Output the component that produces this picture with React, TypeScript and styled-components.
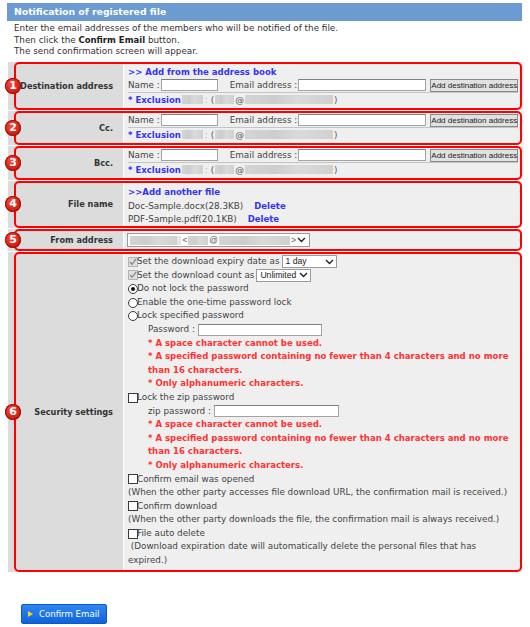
import React from "react";
import styled, { createGlobalStyle } from "styled-components";

const GlobalStyle = createGlobalStyle`
  html, body { margin: 0; padding: 0; background: #fff; }
  body {
    font-family: "DejaVu Sans", Verdana, sans-serif;
    font-size: 8.8px;
    color: #444;
  }
  * { box-sizing: border-box; }
`;

const Page = styled.div`
  padding: 3px 8px 0 7px;
`;

const TitleBar = styled.div`
  height: 18px;
  line-height: 18px;
  background: #6b9bd1;
  color: #fff;
  font-weight: bold;
  font-size: 9.3px;
  padding-left: 7px;
`;

const Intro = styled.div`
  padding: 2px 7px 4px;
  line-height: 11.5px;
  color: #333;
  b { color: #222; font-size: 8.5px; }
`;

const Table = styled.div`
  margin-left: 1px;
  display: flex;
  flex-direction: column;
  gap: 1px;
`;

const Row = styled.div`
  position: relative;
  display: grid;
  grid-template-columns: 115px 1fr;
  gap: 1px;
`;

const Label = styled.div`
  background: #dcdcdc;
  display: flex;
  align-items: center;
  justify-content: flex-end;
  padding-right: 10px;
  font-weight: bold;
  font-size: 8.2px;
  color: #333;
`;

const Value = styled.div<{ $pt: number; $pb: number; $lh?: number }>`
  background: #efefef;
  padding: ${(p) => p.$pt}px 4px ${(p) => p.$pb}px;
  line-height: ${(p) => p.$lh ?? 14}px;
`;

const Outline = styled.div`
  position: absolute;
  top: 0;
  bottom: 0;
  left: 6px;
  right: 0;
  border: 2px solid #ff0000;
  border-radius: 5px;
  pointer-events: none;
`;

const Badge = styled.span`
  position: absolute;
  left: -3px;
  top: 50%;
  width: 16px;
  height: 16px;
  margin-top: -8px;
  border-radius: 50%;
  background: radial-gradient(circle at 40% 35%, #f2503f, #c8140c 75%);
  box-shadow: inset 0 0 0 1px #a80f08;
  color: #fff;
  font-weight: bold;
  font-size: 11px;
  line-height: 16px;
  text-align: center;
  z-index: 2;
`;

const Line = styled.div<{ $h?: number }>`
  display: flex;
  align-items: center;
  height: ${(p) => p.$h ?? 14}px;
  white-space: nowrap;
`;

const NameLine = styled(Line)`
  border-bottom: 1px solid #c4c4c4;
  margin-right: 2px;
`;

const Link = styled.span`
  color: #3535f0;
  font-weight: bold;
  font-size: 8.55px;
  cursor: pointer;
`;

const DeleteLink = styled(Link)`
  margin-left: 11px;
`;

const TextBox = styled.input<{ $w: number }>`
  width: ${(p) => p.$w}px;
  height: 12px;
  padding: 0;
  margin: 0 0 0 1px;
  border: 1px solid #a3a3a3;
  border-top-color: #808080;
  background: #fff;
`;

const EmailLabel = styled.span`
  margin-left: 12px;
`;

const AddButton = styled.button`
  width: 88px;
  height: 13px;
  margin-left: 4px;
  padding: 0;
  font-family: "Liberation Sans", Arial, sans-serif;
  font-size: 8px;
  line-height: 11px;
  color: #222;
  background: #e1e1e1;
  border: 1px solid #8a8a8a;
  border-radius: 0;
  white-space: nowrap;
`;

const Blur = styled.span<{ $w: number; $tone?: string }>`
  display: inline-block;
  width: ${(p) => p.$w}px;
  height: 9px;
  background: ${(p) => p.$tone ?? "linear-gradient(90deg, #d4d4d4, #cdcdcd 35%, #dadada 60%, #d0d0d0)"};
`;

const Faint = styled.span`
  color: #aaa;
  margin: 0 2px;
`;

const Punct = styled.span`
  color: #555;
  margin: 0 1px;
`;

const FakeSelect = styled.span<{ $w: number }>`
  display: inline-flex;
  align-items: center;
  width: ${(p) => p.$w}px;
  height: 13px;
  margin-left: 2px;
  padding: 0 2px 0 3px;
  background: #fff;
  border: 1px solid #9a9a9a;
  font-family: "Liberation Sans", Arial, sans-serif;
  font-size: 8.6px;
  color: #222;
  svg { margin-left: auto; }
`;

const FromSelect = styled(FakeSelect)`
  height: 14px;
  margin-left: -1px;
  padding: 0 3px 0 2px;
`;

const Chevron = () => (
  <svg width="9" height="6" viewBox="0 0 9 6">
    <path d="M1 1 L4.5 4.5 L8 1" fill="none" stroke="#222" strokeWidth="1.4" />
  </svg>
);

const Box = styled.span<{ $disabled?: boolean }>`
  display: inline-flex;
  align-items: center;
  justify-content: center;
  width: 10px;
  height: 10px;
  flex: none;
  border: 1px solid ${(p) => (p.$disabled ? "#b4b4b4" : "#3a3a3a")};
  background: ${(p) => (p.$disabled ? "#dedede" : "#fff")};
  margin-right: -1px;
`;

const Radio = styled.span<{ $on?: boolean }>`
  display: inline-flex;
  align-items: center;
  justify-content: center;
  width: 10px;
  height: 10px;
  flex: none;
  border-radius: 50%;
  border: 1px solid #3a3a3a;
  background: #fff;
  margin-right: -1px;
  &::after {
    content: "";
    width: 4px;
    height: 4px;
    border-radius: 50%;
    background: ${(p) => (p.$on ? "#111" : "transparent")};
  }
`;

const CheckMark = () => (
  <svg width="8" height="8" viewBox="0 0 8 8">
    <path d="M1 4 L3 6.3 L7.2 0.8" fill="none" stroke="#8a8a8a" strokeWidth="1.3" />
  </svg>
);

const Indent = styled.div`
  padding-left: 20px;
`;

const Note = styled.div`
  color: #ff3333;
  font-weight: bold;
  font-size: 8.55px;
`;

const Plain = styled.div``;

const Footer = styled.div`
  padding: 32px 0 0 14px;
`;

const ConfirmButton = styled.button`
  display: inline-flex;
  align-items: center;
  width: 86px;
  height: 20px;
  padding: 0 0 0 6px;
  border: 1px solid #0b58c8;
  border-radius: 2px;
  background: linear-gradient(#2e87f2, #0f63dc);
  color: #fff;
  font-family: "DejaVu Sans", Verdana, sans-serif;
  font-size: 8.6px;
  gap: 6px;
  cursor: pointer;
`;

const Triangle = styled.span`
  width: 0;
  height: 0;
  border-top: 3.5px solid transparent;
  border-bottom: 3.5px solid transparent;
  border-left: 5px solid #ffd21a;
`;

const Spacer = styled.span<{ $w: number }>`
  display: inline-block;
  width: ${(p) => p.$w}px;
`;

const Exclusion = () => (
  <Line>
    <Link>* Exclusion</Link>
    <Spacer $w={1} />
    <Blur $w={21} />
    <Faint>:</Faint>
    <Punct>(</Punct>
    <Blur $w={19} />
    <Punct>@</Punct>
    <Blur $w={88} />
    <Punct>)</Punct>
  </Line>
);

const NameFields = () => (
  <NameLine>
    <span>Name :</span>
    <TextBox $w={57} />
    <EmailLabel>Email address :</EmailLabel>
    <TextBox $w={128} />
    <AddButton>Add destination address</AddButton>
  </NameLine>
);

const Marked = ({ n, children }: { n: number; children: React.ReactNode }) => (
  <Row>
    {children}
    <Outline />
    <Badge>{n}</Badge>
  </Row>
);

export default function App() {
  return (
    <>
      <GlobalStyle />
      <Page>
        <TitleBar>Notification of registered file</TitleBar>
        <Intro>
          Enter the email addresses of the members who will be notified of the file.
          <br />
          Then click the <b>Confirm Email</b> button.
          <br />
          The send confirmation screen will appear.
        </Intro>
        <Table>
          <Marked n={1}>
            <Label>Destination address</Label>
            <Value $pt={3} $pb={3}>
              <Line>
                <Link>&gt;&gt; Add from the address book</Link>
              </Line>
              <NameFields />
              <Exclusion />
            </Value>
          </Marked>
          <Marked n={2}>
            <Label>Cc.</Label>
            <Value $pt={3} $pb={3}>
              <NameFields />
              <Exclusion />
            </Value>
          </Marked>
          <Marked n={3}>
            <Label>Bcc.</Label>
            <Value $pt={3} $pb={3}>
              <NameFields />
              <Exclusion />
            </Value>
          </Marked>
          <Marked n={4}>
            <Label>File name</Label>
            <Value $pt={5} $pb={2}>
              <Line $h={13.5}>
                <Link>&gt;&gt;Add another file</Link>
              </Line>
              <Line $h={13.5}>
                Doc-Sample.docx(28.3KB)
                <DeleteLink>Delete</DeleteLink>
              </Line>
              <Line $h={13.5}>
                PDF-Sample.pdf(20.1KB)
                <DeleteLink>Delete</DeleteLink>
              </Line>
            </Value>
          </Marked>
          <Marked n={5}>
            <Label>From address</Label>
            <Value $pt={4} $pb={4}>
              <Line>
                <FromSelect $w={183}>
                  <Blur $w={48} />
                  <Blur $w={4} $tone="#e6e6e6" />
                  <Punct>&lt;</Punct>
                  <Blur $w={20} />
                  <Punct>@</Punct>
                  <Blur $w={72} />
                  <Punct>&gt;</Punct>
                  <Chevron />
                </FromSelect>
              </Line>
            </Value>
          </Marked>
          <Marked n={6}>
            <Label>Security settings</Label>
            <Value $pt={3} $pb={4} $lh={13.6}>
              <Line $h={13.6}>
                <Box $disabled>
                  <CheckMark />
                </Box>
                Set the download expiry date as
                <FakeSelect $w={55}>
                  1 day
                  <Chevron />
                </FakeSelect>
              </Line>
              <Line $h={13.6}>
                <Box $disabled>
                  <CheckMark />
                </Box>
                Set the download count as
                <FakeSelect $w={55}>
                  Unlimited
                  <Chevron />
                </FakeSelect>
              </Line>
              <Line $h={13.6}>
                <Radio $on />
                Do not lock the password
              </Line>
              <Line $h={13.6}>
                <Radio />
                Enable the one-time password lock
              </Line>
              <Line $h={13.6}>
                <Radio />
                Lock specified password
              </Line>
              <Indent>
                <Line $h={13.6}>
                  Password :<TextBox $w={124} style={{ marginLeft: 3 }} />
                </Line>
                <Note>* A space character cannot be used.</Note>
                <Note>
                  * A specified password containing no fewer than 4 characters and no more
                  <br />
                  than 16 characters.
                </Note>
                <Note>* Only alphanumeric characters.</Note>
              </Indent>
              <Line $h={13.6}>
                <Box />
                Lock the zip password
              </Line>
              <Indent>
                <Line $h={13.6}>
                  zip password :<TextBox $w={125} style={{ marginLeft: 3 }} />
                </Line>
                <Note>* A space character cannot be used.</Note>
                <Note>
                  * A specified password containing no fewer than 4 characters and no more
                  <br />
                  than 16 characters.
                </Note>
                <Note>* Only alphanumeric characters.</Note>
              </Indent>
              <Line $h={13.6}>
                <Box />
                Confirm email was opened
              </Line>
              <Plain>
                (When the other party accesses file download URL, the confirmation mail is received.)
              </Plain>
              <Line $h={13.6}>
                <Box />
                Confirm download
              </Line>
              <Plain>
                (When the other party downloads the file, the confirmation mail is always received.)
              </Plain>
              <Line $h={13.6}>
                <Box />
                File auto delete
              </Line>
              <Plain>
                &nbsp;(Download expiration date will automatically delete the personal files that has
                <br />
                expired.)
              </Plain>
            </Value>
          </Marked>
        </Table>
        <Footer>
          <ConfirmButton>
            <Triangle />
            Confirm Email
          </ConfirmButton>
        </Footer>
      </Page>
    </>
  );
}
